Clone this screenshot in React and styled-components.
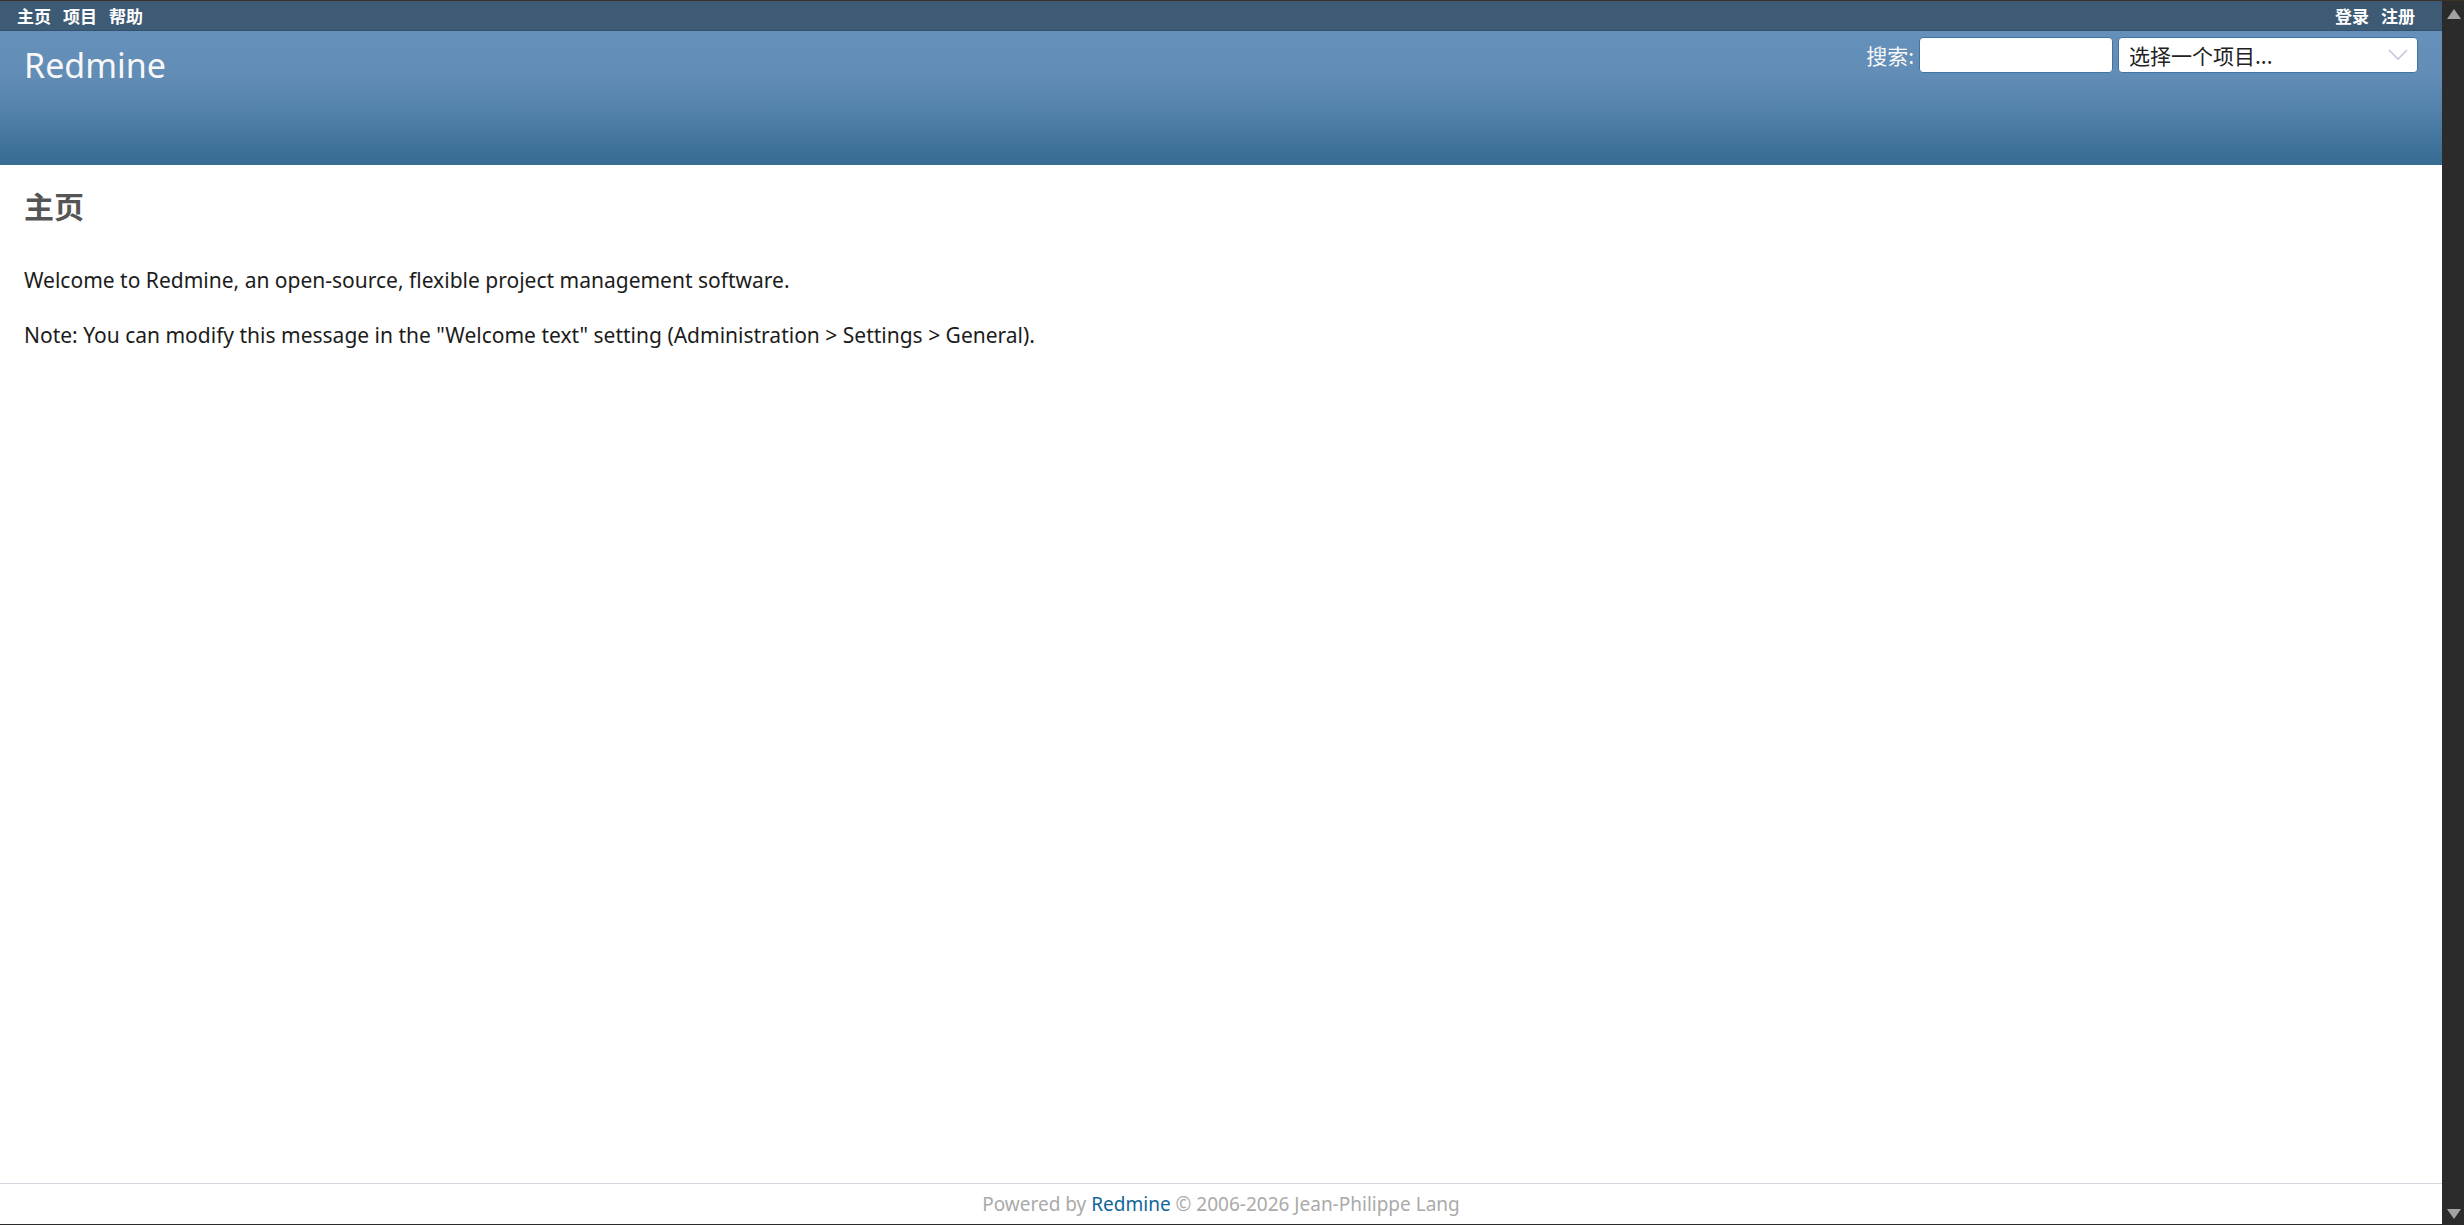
import React from "react";
import styled, { createGlobalStyle } from "styled-components";

const GlobalStyle = createGlobalStyle`
  body {
    margin: 0;
    background: #fff;
    color: #1c1c1c;
    font-family: "Noto Sans", "Noto Sans CJK SC", sans-serif;
  }
`;

const Frame = styled.div`
  display: flex;
  box-sizing: border-box;
  height: 100vh;
  border-top: 1px solid #3a3129;
  border-bottom: 1px solid #2b2b2b;
`;

const Wrapper = styled.div`
  flex: 1;
  display: flex;
  flex-direction: column;
  min-width: 0;
`;

// browser scroll bar on the right edge (dark, arrows only)
const ScrollTrack = styled.div`
  width: 22px;
  flex: none;
  display: flex;
  flex-direction: column;
  justify-content: space-between;
  align-items: center;
  padding: 8px 0 5px;
  background: #2b2b2b;
`;

const Arrow = styled.div`
  width: 0;
  height: 0;
  margin-left: 2px;
  border-left: 7px solid transparent;
  border-right: 7px solid transparent;
  ${({ $down }) =>
    $down ? "border-top: 10px solid #a3a3a3;" : "border-bottom: 10px solid #a3a3a3;"}
`;

const TopMenu = styled.div`
  height: 29px;
  display: flex;
  align-items: center;
  justify-content: space-between;
  padding: 0 27px 0 17px;
  background: #3e5b76;
  border-bottom: 1px solid #34506a;
`;

const MenuList = styled.ul`
  display: flex;
  gap: 12px;
  margin: 0;
  padding: 0;
  list-style: none;
`;

const MenuItem = styled.li`
  font-family: "Noto Sans CJK SC", "Noto Sans", sans-serif;
  font-size: 17px;
  font-weight: 700;
  color: #fff;
  line-height: 1;
`;

const Header = styled.div`
  height: 134px;
  display: flex;
  justify-content: space-between;
  align-items: flex-start;
  padding: 0 24px;
  background: linear-gradient(#6590b9 0%, #628db6 32%, #4f7fa7 65%, #376b91 100%);
  color: #f8f8f8;
`;

const Title = styled.h1`
  margin: 14px 0 0;
  font-size: 34px;
  font-weight: 400;
  line-height: 41px;
  color: #f8f8f8;
`;

const QuickSearch = styled.div`
  display: flex;
  align-items: center;
  gap: 5px;
  margin-top: 6px;
`;

const SearchLabel = styled.label`
  font-family: "Noto Sans CJK SC", "Noto Sans", sans-serif;
  font-size: 21px;
  color: #f8f8f8;
`;

const SearchInput = styled.input`
  box-sizing: border-box;
  width: 194px;
  height: 36px;
  border: 1px solid #3f74a3;
  border-radius: 4px;
  background: #fff;
  outline: none;
`;

const SelectBox = styled.div`
  position: relative;
  width: 300px;
  height: 36px;
`;

const ProjectSelect = styled.select`
  box-sizing: border-box;
  width: 100%;
  height: 100%;
  appearance: none;
  padding: 0 40px 0 10px;
  border: 1px solid #3f74a3;
  border-radius: 4px;
  background: #fff;
  color: #222;
  font-family: "Noto Sans CJK SC", "Noto Sans", sans-serif;
  font-size: 21px;
  outline: none;
`;

const Chevron = styled.svg`
  position: absolute;
  right: 10px;
  top: 12px;
  pointer-events: none;
`;

const Content = styled.div`
  flex: 1;
  padding: 22px 24px 0;
`;

const PageTitle = styled.h2`
  margin: 0 0 40px;
  font-family: "Noto Sans CJK SC", "Noto Sans", sans-serif;
  font-size: 30px;
  font-weight: 700;
  line-height: 36px;
  color: #555;
`;

const Para = styled.p`
  margin: 0 0 21px;
  font-size: 21px;
  line-height: 34px;
  color: #1c1c1c;
`;

const Footer = styled.div`
  border-top: 1px solid #d3d7de;
  padding: 7px 0 7px;
  text-align: center;
  font-size: 19px;
  line-height: 26px;
  color: #aaa;
`;

const FooterLink = styled.a`
  color: #169;
  text-decoration: none;
`;

export default function App() {
  return (
    <>
      <GlobalStyle />
      <Frame>
        <Wrapper>
          <TopMenu>
            <MenuList>
              <MenuItem>主页</MenuItem>
              <MenuItem>项目</MenuItem>
              <MenuItem>帮助</MenuItem>
            </MenuList>
            <MenuList>
              <MenuItem>登录</MenuItem>
              <MenuItem>注册</MenuItem>
            </MenuList>
          </TopMenu>
          <Header>
            <Title>Redmine</Title>
            <QuickSearch>
              <SearchLabel>搜索:</SearchLabel>
              <SearchInput type="text" />
              <SelectBox>
                <ProjectSelect defaultValue="">
                  <option value="">选择一个项目...</option>
                </ProjectSelect>
                <Chevron width="20" height="12" viewBox="0 0 20 12">
                  <path d="M1 1 L10 10 L19 1" fill="none" stroke="#c6c8da" strokeWidth="1.6" />
                </Chevron>
              </SelectBox>
            </QuickSearch>
          </Header>
          <Content>
            <PageTitle>主页</PageTitle>
            <Para>Welcome to Redmine, an open-source, flexible project management software.</Para>
            <Para>
              Note: You can modify this message in the "Welcome text" setting (Administration &gt; Settings &gt; General).
            </Para>
          </Content>
          <Footer>
            Powered by <FooterLink href="#">Redmine</FooterLink> © 2006-2026 Jean-Philippe Lang
          </Footer>
        </Wrapper>
        <ScrollTrack>
          <Arrow />
          <Arrow $down />
        </ScrollTrack>
      </Frame>
    </>
  );
}
